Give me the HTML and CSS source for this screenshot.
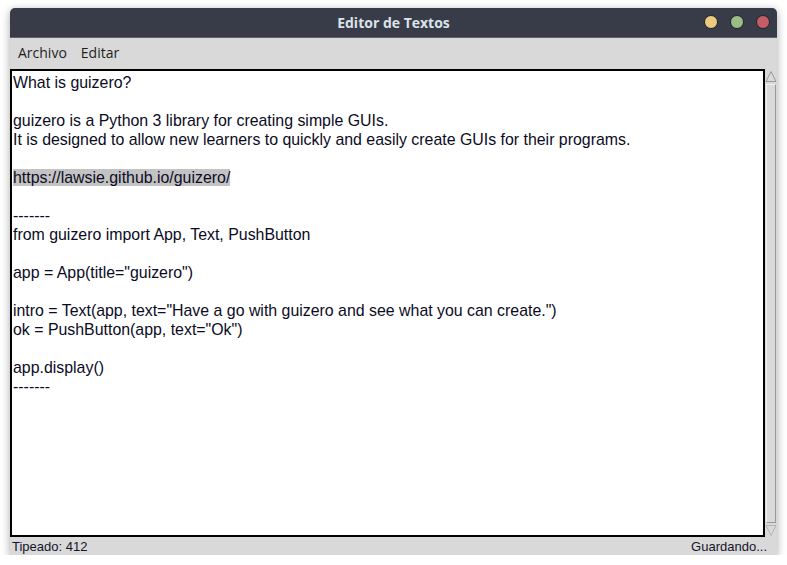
FILE: index.html
```html
<!DOCTYPE html>
<html>
<head>
<meta charset="utf-8">
<link rel="stylesheet" href="styles.css">
</head>
<body>
<div class="window">
  <div class="titlebar">
    <span class="title">Editor de Textos</span>
    <div class="lights">
      <span class="light yellow"></span>
      <span class="light green"></span>
      <span class="light red"></span>
    </div>
  </div>
  <div class="menubar">
    <span class="menu">Archivo</span>
    <span class="menu">Editar</span>
  </div>
  <div class="editor">
    <div class="text"><div>What is guizero?</div><div>&nbsp;</div><div>guizero is a Python 3 library for creating simple GUIs.</div><div>It is designed to allow new learners to quickly and easily create GUIs for their programs.</div><div>&nbsp;</div><div><span class="sel">https://lawsie.github.io/guizero/</span></div><div>&nbsp;</div><div>-------</div><div>from guizero import App, Text, PushButton</div><div>&nbsp;</div><div>app = App(title="guizero")</div><div>&nbsp;</div><div>intro = Text(app, text="Have a go with guizero and see what you can create.")</div><div>ok = PushButton(app, text="Ok")</div><div>&nbsp;</div><div>app.display()</div><div>-------</div></div>
    <div class="scrollbar">
      <svg class="arrow" width="12" height="13" viewBox="0 0 12 13"><polygon points="6,1.5 11,11.5 1,11.5" fill="#d9d9d9" stroke="#9a9a9a" stroke-width="1"/></svg>
      <div class="slider"></div>
      <svg class="arrow" width="12" height="13" viewBox="0 0 12 13"><polygon points="1,1.5 11,1.5 6,11.5" fill="#d9d9d9" stroke="#b5b5b5" stroke-width="1"/></svg>
    </div>
  </div>
  <div class="statusbar">
    <span>Tipeado: 412</span>
    <span>Guardando...</span>
  </div>
</div>
</body>
</html>
```
FILE: styles.css
```css
html, body {
  margin: 0;
  padding: 0;
  background: #ffffff;
}
body {
  padding: 8px 0 0 10px;
}
.window {
  width: 767px;
  height: 547px;
  display: flex;
  flex-direction: column;
  background: #d9d9d9;
  border-radius: 5px 5px 0 0;
  box-shadow: 0 2px 9px rgba(0, 0, 0, 0.35);
  overflow: hidden;
}
.titlebar {
  height: 29px;
  flex: none;
  background: #373c48;
  border-bottom: 1px solid #5d626c;
  display: flex;
  align-items: center;
  justify-content: center;
  position: relative;
}
.title {
  font-family: "Open Sans", "DejaVu Sans", sans-serif;
  font-weight: 700;
  font-size: 14px;
  color: #dde2ea;
}
.lights {
  position: absolute;
  right: 7px;
  top: 7px;
  display: flex;
  gap: 12px;
}
.light {
  width: 12px;
  height: 12px;
  border-radius: 50%;
  border: 1px solid #20242c;
}
.yellow { background: #eccb80; }
.green { background: #9dbd86; }
.red { background: #c55d66; }
.menubar {
  height: 31px;
  box-sizing: border-box;
  flex: none;
  display: flex;
  align-items: center;
  gap: 14px;
  padding: 0 0 3px 8px;
  font-family: "Open Sans", "DejaVu Sans", sans-serif;
  font-size: 14px;
  color: #1e1e1e;
}
.editor {
  flex: 1;
  display: flex;
  min-height: 0;
}
.text {
  flex: 1;
  background: #ffffff;
  border: 2px solid #000000;
  padding: 2px 1px 0 1px;
  font-family: "Liberation Sans", Arial, sans-serif;
  font-size: 15.9px;
  line-height: 19px;
  color: #0b0b24;
  white-space: pre;
  overflow: hidden;
}
.sel {
  background: #c3c3c3;
}
.scrollbar {
  width: 12px;
  flex: none;
  display: flex;
  flex-direction: column;
  background: #d9d9d9;
  padding-top: 1px;
}
.arrow {
  display: block;
  flex: none;
}
.slider {
  flex: 1;
  margin: 1px 1px;
  border-left: 1px solid #f2f2f2;
  border-top: 1px solid #f2f2f2;
  border-right: 1px solid #9a9a9a;
  border-bottom: 1px solid #9a9a9a;
}
.statusbar {
  height: 18px;
  flex: none;
  display: flex;
  justify-content: space-between;
  align-items: center;
  padding: 0 10px 0 2px;
  font-family: "Liberation Sans", Arial, sans-serif;
  font-size: 13px;
  color: #14142a;
}
```
